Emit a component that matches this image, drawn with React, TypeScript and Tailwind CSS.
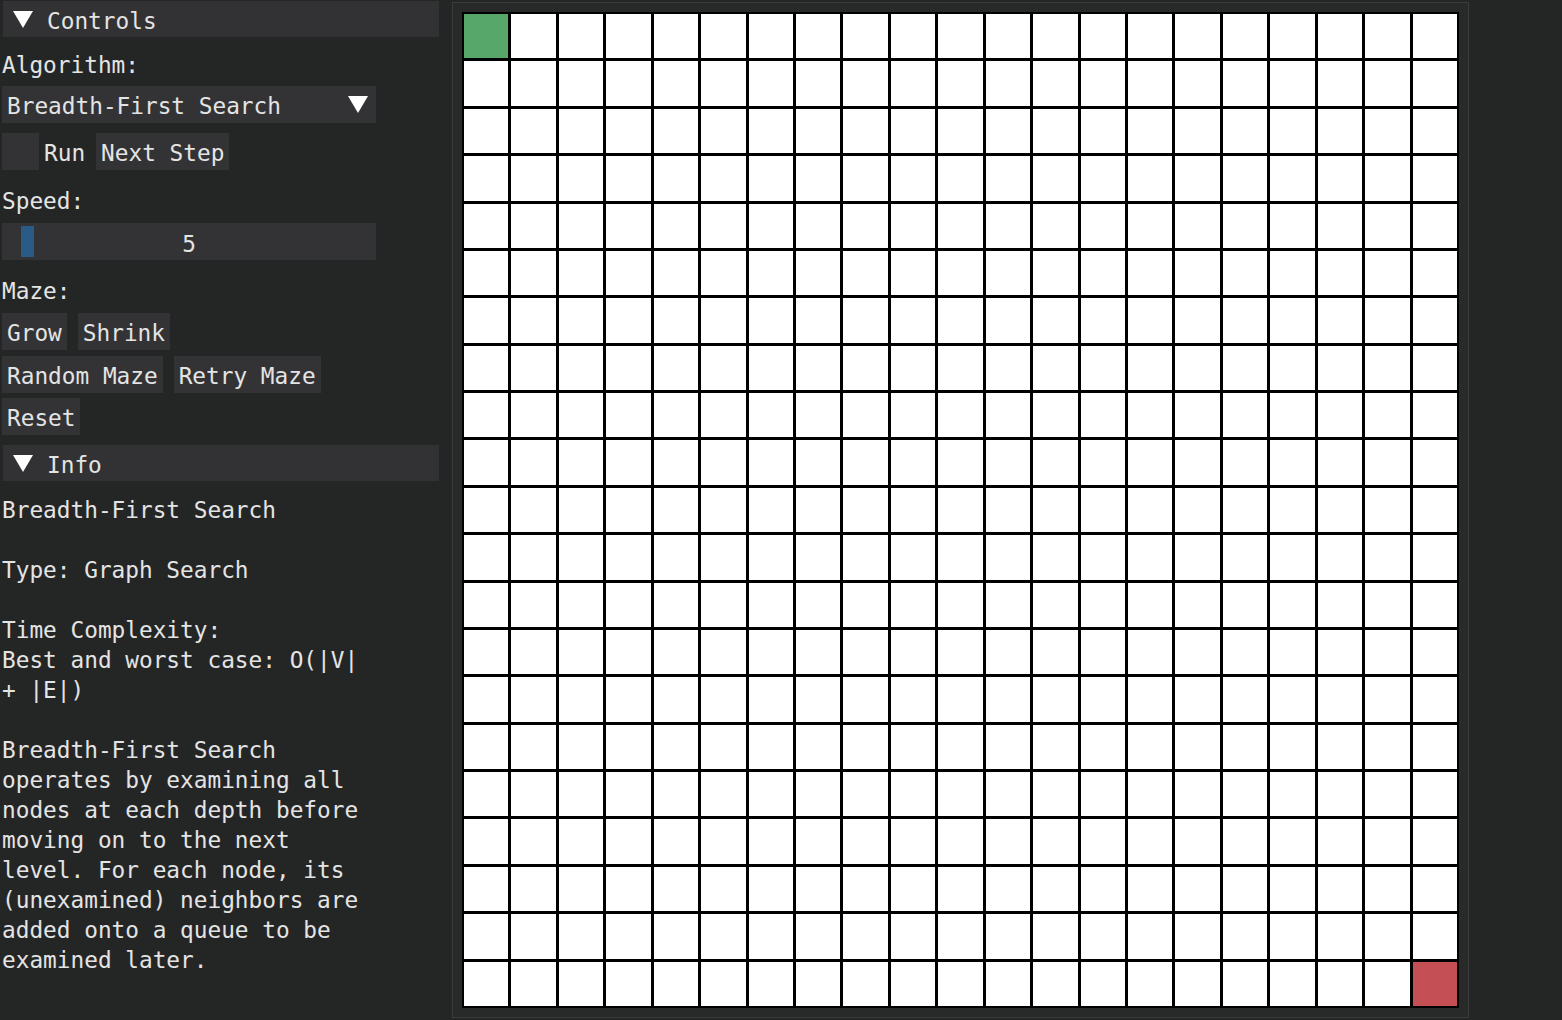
import React from 'react';

const SIZE = 21;

function Caret({ className }: { className?: string }) {
  return (
    <svg className={className} width="20" height="17" viewBox="0 0 20 17">
      <polygon points="0,0 20,0 10,17" fill="#ffffff" />
    </svg>
  );
}

function Header({ label }: { label: string }) {
  return (
    <div className="ml-[1px] flex h-[36px] w-[436px] items-center bg-[#323234]">
      <Caret className="ml-[10px] mr-[14px]" />
      <span className="pt-[4px]">{label}</span>
    </div>
  );
}

function Button({ label }: { label: string }) {
  return (
    <div className="flex h-[37px] items-center bg-[#333335] px-[5px] pt-[3px]">{label}</div>
  );
}

const infoLines = [
  'Breadth-First Search',
  '',
  'Type: Graph Search',
  '',
  'Time Complexity:',
  'Best and worst case: O(|V|',
  '+ |E|)',
  '',
  'Breadth-First Search',
  'operates by examining all',
  'nodes at each depth before',
  'moving on to the next',
  'level. For each node, its',
  '(unexamined) neighbors are',
  'added onto a queue to be',
  'examined later.',
];

export default function App() {
  const cells = Array.from({ length: SIZE * SIZE }, (_, i) => i);

  return (
    <div
      className="flex h-[1020px] w-[1562px] overflow-hidden bg-[#242626] text-[22.75px] leading-[30px] text-[#e4e4e4]"
      style={{ fontFamily: '"DejaVu Sans Mono", "Liberation Mono", monospace' }}
    >
      {/* Controls column */}
      <div className="flex w-[450px] shrink-0 flex-col pl-[2px] pt-[1px]">
        <Header label="Controls" />
        <div className="mt-[13px]">Algorithm:</div>
        <div className="mt-[6px] flex h-[37px] w-[374px] items-center justify-between bg-[#333335] pl-[5px] pr-[8px]">
          <span className="pt-[3px]">Breadth-First Search</span>
          <Caret />
        </div>
        <div className="mt-[10px] flex items-center">
          <div className="h-[37px] w-[37px] bg-[#333335]" />
          <span className="ml-[5px] mr-[11px] pt-[3px]">Run</span>
          <Button label="Next Step" />
        </div>
        <div className="mt-[16px]">Speed:</div>
        <div className="relative mt-[7px] flex h-[37px] w-[374px] items-center justify-center bg-[#333335]">
          <div className="absolute left-[19px] top-[3px] h-[31px] w-[13px] bg-[#2a5b87]" />
          <span className="pt-[4px]">5</span>
        </div>
        <div className="mt-[16px]">Maze:</div>
        <div className="mt-[7px] flex gap-[11px]">
          <Button label="Grow" />
          <Button label="Shrink" />
        </div>
        <div className="mt-[6px] flex gap-[11px]">
          <Button label="Random Maze" />
          <Button label="Retry Maze" />
        </div>
        <div className="mt-[5px] flex">
          <Button label="Reset" />
        </div>
        <div className="mt-[10px]">
          <Header label="Info" />
        </div>
        <div className="mt-[14px] flex flex-col">
          {infoLines.map((line, i) => (
            <div key={i} className="h-[30px] whitespace-pre">
              {line}
            </div>
          ))}
        </div>
      </div>

      {/* Maze panel */}
      <div className="ml-[2px] mt-[2px] h-[1016px] w-[1017px] shrink-0 border border-[#3a3b3b] bg-[#282a2a] pl-[9px] pt-[9px]">
        <div className="grid h-[996px] w-[997px] grid-cols-[repeat(21,1fr)] grid-rows-[repeat(21,1fr)] gap-[3px] bg-black p-[2px]">
          {cells.map((i) => (
            <div
              key={i}
              className={
                i === 0 ? 'bg-[#56a769]' : i === SIZE * SIZE - 1 ? 'bg-[#c44f55]' : 'bg-white'
              }
            />
          ))}
        </div>
      </div>
    </div>
  );
}
